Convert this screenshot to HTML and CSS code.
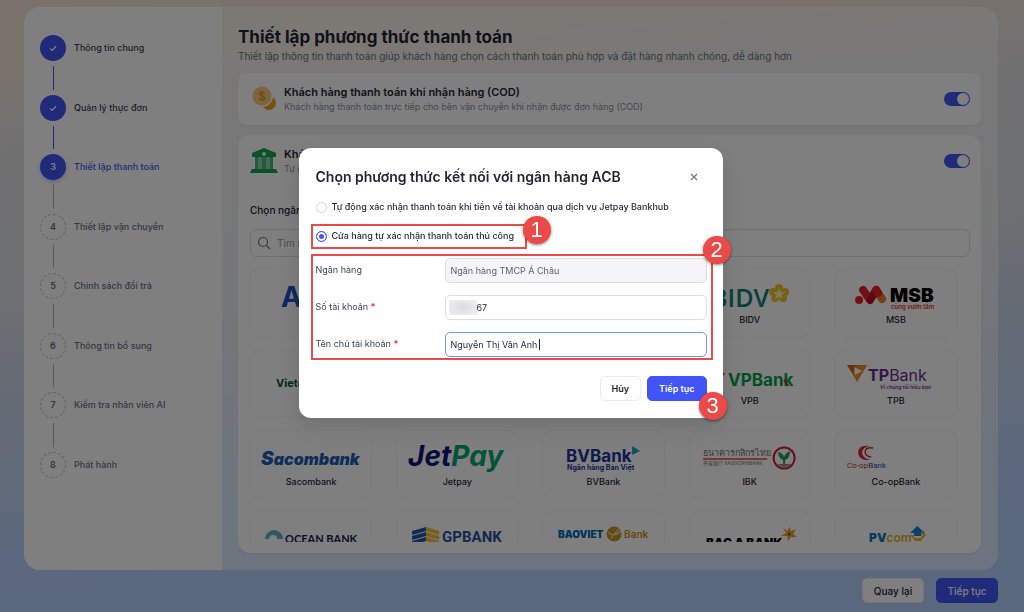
FILE: index.html
```html
<!DOCTYPE html>
<html lang="vi">
<head>
    <meta charset="UTF-8">
    <meta name="viewport" content="width=device-width, initial-scale=1.0">
    <title>Thiết lập phương thức thanh toán</title>
    <link rel="stylesheet" href="styles.css">
</head>
<body>
    <div class="page">
        <div class="panel">

            <!-- Setup steps -->
            <nav class="sidebar">
                <ol class="steps">
                    <li class="step done">
                        <div class="rail"><span class="dot"><svg width="10" height="10" viewBox="0 0 10 10"><path d="M2 5.4 4.1 7.4 8 3.2" fill="none" stroke="#fff" stroke-width="1.3"/></svg></span><span class="line"></span></div>
                        <span class="step-name">Thông tin chung</span>
                    </li>
                    <li class="step done">
                        <div class="rail"><span class="dot"><svg width="10" height="10" viewBox="0 0 10 10"><path d="M2 5.4 4.1 7.4 8 3.2" fill="none" stroke="#fff" stroke-width="1.3"/></svg></span><span class="line"></span></div>
                        <span class="step-name">Quản lý thực đơn</span>
                    </li>
                    <li class="step current">
                        <div class="rail"><span class="dot">3</span><span class="line"></span></div>
                        <span class="step-name">Thiết lập thanh toán</span>
                    </li>
                    <li class="step">
                        <div class="rail"><span class="dot">4</span><span class="line"></span></div>
                        <span class="step-name">Thiết lập vận chuyển</span>
                    </li>
                    <li class="step">
                        <div class="rail"><span class="dot">5</span><span class="line"></span></div>
                        <span class="step-name">Chính sách đổi trả</span>
                    </li>
                    <li class="step">
                        <div class="rail"><span class="dot">6</span><span class="line"></span></div>
                        <span class="step-name">Thông tin bổ sung</span>
                    </li>
                    <li class="step">
                        <div class="rail"><span class="dot">7</span><span class="line"></span></div>
                        <span class="step-name">Kiểm tra nhân viên AI</span>
                    </li>
                    <li class="step">
                        <div class="rail"><span class="dot">8</span></div>
                        <span class="step-name">Phát hành</span>
                    </li>
                </ol>
            </nav>

            <main class="content">
                <h1>Thiết lập phương thức thanh toán</h1>
                <p class="subtitle">Thiết lập thông tin thanh toán giúp khách hàng chọn cách thanh toán phù hợp và đặt hàng nhanh chóng, dễ dàng hơn</p>

                <!-- Cash on delivery -->
                <section class="card method">
                    <svg class="method-icon" width="28" height="28" viewBox="0 0 28 28">
                        <circle cx="19" cy="18" r="7" fill="#f0a020"/>
                        <circle cx="12" cy="11" r="11" fill="#fff"/>
                        <circle cx="12" cy="11" r="9.500" fill="#f8c880"/>
                        <path d="M14.500 9C14.200 7.700 13.300 7.200 12 7.200 10.500 7.200 9.600 7.900 9.600 9 9.600 11.600 14.600 10.200 14.600 13 14.600 14.200 13.500 14.900 12 14.900 10.500 14.900 9.600 14.300 9.300 13M12 5.800V16.200" fill="none" stroke="#e89a10" stroke-width="1.500"/>
                    </svg>
                    <div class="method-text">
                        <h2>Khách hàng thanh toán khi nhận hàng (COD)</h2>
                        <p>Khách hàng thanh toán trực tiếp cho bên vận chuyển khi nhận được đơn hàng (COD)</p>
                    </div>
                    <input type="checkbox" class="switch" aria-label="Thanh toán khi nhận hàng" checked>
                </section>

                <!-- Bank transfer -->
                <section class="card bank">
                    <div class="method">
                        <svg class="method-icon" width="28" height="28" viewBox="0 0 28 28">
                            <path d="M14 1 26 6V10H2V6Z" fill="#0ca24a"/>
                            <path d="M5 10H23V22H5Z" fill="#8ccfa6"/>
                            <path d="M5 10H8V22H5ZM12 10H16V22H12ZM20 10H23V22H20Z" fill="#4cb478"/>
                            <path d="M2 22H26L28 26H0Z" fill="#0ca24a"/>
                            <circle cx="14" cy="7" r="2" fill="#e4fff0"/>
                        </svg>
                        <div class="method-text">
                            <h2>Khách hàng chuyển khoản</h2>
                            <p>Tự động xác nhận thanh toán</p>
                        </div>
                        <input type="checkbox" class="switch" aria-label="Thanh toán chuyển khoản" checked>
                    </div>

                    <label class="bank-label" for="bankSearch">Chọn ngân hàng</label>
                    <div class="search">
                        <svg width="14" height="14" viewBox="0 0 14 14"><circle cx="6" cy="6" r="4.500" fill="none" stroke="#777b85" stroke-width="1.200"/><path d="M9.500 9.500 13 13" stroke="#777b85" stroke-width="1.300"/></svg>
                        <input type="text" id="bankSearch" placeholder="Tìm ngân hàng">
                    </div>

                    <div class="bank-grid">
                        <div class="bank-card">
                            <svg class="logo" viewBox="0 0 122 34"><text class="inter heavy" x="31" y="27" font-size="28" fill="#2050b8">ACB</text></svg>
                            <span>ACB</span>
                        </div>
                        <div class="bank-card"></div>
                        <div class="bank-card"></div>
                        <div class="bank-card">
                            <svg class="logo" viewBox="0 0 122 34">
                                <text class="open semi" x="80" y="27" font-size="25" text-anchor="end" fill="#0c807a">BIDV</text>
                                <g fill="#ecc22e">
                                    <circle cx="90" cy="8" r="4"/><circle cx="96" cy="12" r="4"/><circle cx="94" cy="18" r="4"/><circle cx="86" cy="18" r="4"/><circle cx="84" cy="12" r="4"/>
                                </g>
                                <path d="M90 8 91.500 12 96 12.500 92.500 15 94 19 90 16.800 86 19 87.500 15 84 12.500 88.500 12Z" fill="#fff2b0"/>
                            </svg>
                            <span>BIDV</span>
                        </div>
                        <div class="bank-card">
                            <svg class="logo" viewBox="0 0 122 34">
                                <circle cx="24" cy="20" r="4" fill="#e8202a"/>
                                <path d="M41 10 47 19" stroke="#f07a28" stroke-width="8" stroke-linecap="round"/>
                                <path d="M28 10 35 20 41 10" fill="none" stroke="#e8202a" stroke-width="8" stroke-linecap="round" stroke-linejoin="round"/>
                                <path d="M35 20 39 13" stroke="#b8141e" stroke-width="7" stroke-linecap="round"/>
                                <path d="M41 10 43 13" stroke="#e8202a" stroke-width="8" stroke-linecap="round"/>
                                <text class="inter black" x="55" y="22" font-size="19" fill="#000">MSB</text>
                                <text class="inter semi" x="56" y="29" font-size="6" fill="#e8302a">cùng vươn tầm</text>
                            </svg>
                            <span>MSB</span>
                        </div>

                        <div class="bank-card">
                            <svg class="logo" viewBox="0 0 122 34"><text class="inter heavy" x="26" y="26" font-size="11" fill="#005a34">Vietcombank</text></svg>
                            <span>VCB</span>
                        </div>
                        <div class="bank-card"></div>
                        <div class="bank-card"></div>
                        <div class="bank-card">
                            <svg class="logo" viewBox="0 0 122 34">
                                <path d="M28 12H36L34 15Z" fill="#e02020"/>
                                <text class="inter heavy" x="39" y="25" font-size="17" fill="#00a044">VPBank</text>
                                <path d="M95 19 99 25" fill="none" stroke="#d01c24" stroke-width="2"/>
                            </svg>
                            <span>VPB</span>
                        </div>
                        <div class="bank-card">
                            <svg class="logo" viewBox="0 0 122 34">
                                <path d="M12 4H32L22 21Z" fill="#f08a20"/>
                                <path d="M12 4H22L17 12Z" fill="#d85c14"/>
                                <path d="M19 6 27 10 20 14Z" fill="#fff"/>
                                <text class="inter" x="33" y="20" font-size="16" fill="#6a2c98"><tspan class="heavy">TP</tspan>Bank</text>
                                <text class="inter semi slant" x="45" y="28" font-size="5" fill="#6a2c98">Vì chúng tôi hiểu bạn</text>
                            </svg>
                            <span>TPB</span>
                        </div>

                        <div class="bank-card">
                            <svg class="logo" viewBox="0 0 122 34"><text class="inter black slant" x="11" y="23" font-size="16" fill="#1c5cae"><tspan font-size="19">S</tspan>acombank</text></svg>
                            <span>Sacombank</span>
                        </div>
                        <div class="bank-card">
                            <svg class="logo" viewBox="0 0 122 34"><text class="inter heavy slant" x="12" y="24" font-size="28" fill="#0c1278">Jet<tspan fill="#00a870">Pay</tspan></text></svg>
                            <span>Jetpay</span>
                        </div>
                        <div class="bank-card">
                            <svg class="logo" viewBox="0 0 122 34">
                                <text class="inter heavy" x="24" y="20" font-size="17" fill="#20329a">BVBank</text>
                                <text class="inter heavy" x="25" y="28" font-size="7" fill="#20329a">Ngân hàng Bản Việt</text>
                                <path d="M90 4 98 9 90 13Z" fill="#1c9ac8"/>
                            </svg>
                            <span>BVBank</span>
                        </div>
                        <div class="bank-card">
                            <svg class="logo" viewBox="0 0 122 34">
                                <text class="thai" x="14" y="14" font-size="9" fill="#84746c">ธนาคารกสิกรไทย</text>
                                <path d="M14 17H78" stroke="#d84848" stroke-width="1.500"/>
                                <text class="thai" x="14" y="23" font-size="5" fill="#84746c">开泰银行 KASIKORNBANK</text>
                                <circle cx="95" cy="16" r="10.500" fill="none" stroke="#d81c30" stroke-width="2"/>
                                <path d="M88 22H102Q99 25 95 25 91 25 88 22Z" fill="#8c8c8c"/>
                                <path d="M89 10Q94 11 95 15 96 11 101 9 101 16 96 18V22H94V18Q89 16 89 10Z" fill="#20a058"/>
                            </svg>
                            <span>IBK</span>
                        </div>
                        <div class="bank-card">
                            <svg class="logo" viewBox="0 0 122 34">
                                <path d="M35 4Q23 2 23 11 24 19 35 18 27 16 27 10 28 5 35 4Z" fill="#d82830"/>
                                <path d="M38 6Q30 5 30 10 30 14 36 15" fill="none" stroke="#d82830" stroke-width="1.500"/>
                                <text class="roboto" x="12" y="26" font-size="8" fill="#d82830">Co-op<tspan fill="#24489a">Bank</tspan></text>
                            </svg>
                            <span>Co-opBank</span>
                        </div>

                        <div class="bank-card">
                            <svg class="logo" viewBox="0 0 122 34">
                                <path d="M15 16A9 9 0 1 1 33 16H27A4 4 0 0 0 19 16Z" fill="#5ab4bc"/>
                                <text class="lato heavy" x="35" y="20" font-size="11" fill="#14205c">OCEAN BANK</text>
                            </svg>
                            <span>OceanBank</span>
                        </div>
                        <div class="bank-card">
                            <svg class="logo" viewBox="0 0 122 34">
                                <path d="M16 8 30 4V8L16 12ZM16 13 30 9V13L16 17ZM16 18 30 14V18L16 22Z" fill="#1c58a8"/>
                                <path d="M30 4 43 8V12L30 8ZM30 9 43 13V17L30 13ZM30 14 43 18V22L30 18Z" fill="#ecc02c"/>
                                <text class="roboto heavy" x="46" y="19" font-size="15" fill="#24509c">GPBANK</text>
                            </svg>
                            <span>GPBank</span>
                        </div>
                        <div class="bank-card">
                            <svg class="logo" viewBox="0 0 122 34">
                                <text class="inter black" x="16" y="15" font-size="10" fill="#0068b4">BAOVIET</text>
                                <circle cx="72" cy="11" r="7.500" fill="#c89028"/>
                                <path d="M66 9Q72 15 79 8M68 16Q73 10 78 5" fill="none" stroke="#f4d898" stroke-width="1.200"/>
                                <text class="inter semi" x="82" y="15" font-size="10" fill="#d09020">Bank</text>
                            </svg>
                            <span>BaoVietBank</span>
                        </div>
                        <div class="bank-card">
                            <svg class="logo" viewBox="0 0 122 34">
                                <text class="inter black" x="17" y="24" font-size="12" fill="#000">BAC A BANK</text>
                                <path d="M100 4 102 8 107 6 104 11 108 14 102 14 99 18 98 13 92 13 97 10 94 5 99 8Z" fill="#e8a028"/>
                                <circle cx="100" cy="11" r="1.500" fill="#8c4c10"/>
                            </svg>
                            <span>BacABank</span>
                        </div>
                        <div class="bank-card">
                            <svg class="logo" viewBox="0 0 122 34">
                                <text class="inter black" x="34" y="19" font-size="12" fill="#0878be">PV<tspan class="semi" fill="#e4ac18">com</tspan></text>
                                <path d="M75 10 82 3 90 10H86V13H79V10Z" fill="#0a84cc"/>
                                <path d="M75 12H79V15H86V18H80ZM86 8 91 12 86 17V14L88 12 86 11Z" fill="#f0b41c"/>
                            </svg>
                            <span>PVcomBank</span>
                        </div>
                    </div>
                </section>
            </main>
        </div>

        <footer class="page-footer">
            <button type="button" class="btn wide">Quay lại</button>
            <button type="button" class="btn primary wide">Tiếp tục</button>
        </footer>
    </div>

    <!-- Connect dialog -->
    <div class="overlay">
        <form class="modal" role="dialog" aria-labelledby="modalTitle">
            <div class="modal-header">
                <h2 id="modalTitle">Chọn phương thức kết nối với ngân hàng ACB</h2>
                <button type="button" class="close" aria-label="Đóng"><svg width="8" height="8" viewBox="0 0 8 8"><path d="M1 1 7 7M7 1 1 7" stroke="#6b7080" stroke-width="1.100"/></svg></button>
            </div>

            <label class="option"><input type="radio" name="mode">Tự động xác nhận thanh toán khi tiền về tài khoản qua dịch vụ Jetpay Bankhub</label>

            <div class="callout callout-option">
                <label class="option"><input type="radio" name="mode" checked>Cửa hàng tự xác nhận thanh toán thủ công</label>
                <span class="badge badge-one">1</span>
            </div>

            <div class="callout callout-fields">
                <div class="field">
                    <label for="bankName">Ngân hàng</label>
                    <div class="control"><input type="text" id="bankName" value="Ngân hàng TMCP Á Châu" disabled></div>
                </div>
                <div class="field">
                    <label for="accountNumber">Số tài khoản <b>*</b></label>
                    <div class="control"><input type="text" id="accountNumber" class="masked" value="67"><span class="mask"></span></div>
                </div>
                <div class="field">
                    <label for="accountName">Tên chủ tài khoản <b>*</b></label>
                    <div class="control"><input type="text" id="accountName" class="active" value="Nguyễn Thị Vân Anh"><span class="caret"></span></div>
                </div>
                <span class="badge badge-two">2</span>
            </div>

            <div class="modal-footer">
                <button type="button" class="btn">Hủy</button>
                <button type="button" class="btn primary">Tiếp tục</button>
                <span class="badge badge-three">3</span>
            </div>
        </form>
    </div>
</body>
</html>
```
FILE: styles.css
```css
* {
    box-sizing: border-box;
}

body {
    margin: 0;
    font-family: Inter, "Noto Sans", sans-serif;
    font-size: 9px;
    line-height: 12px;
    color: #1f2433;
}

h1, h2, p, ol {
    margin: 0;
    padding: 0;
}

input, button {
    font: inherit;
    color: inherit;
}

.page {
    display: flex;
    flex-direction: column;
    height: 100vh;
    padding-top: 7px;
    overflow: hidden;
    background: linear-gradient(175deg, #f4e5d5 0%, #f2e4d6 10%, #e2e1e3 22%, #dddfe6 42%, #c4d2ea 62%, #b6d1fb 80%, #b4d1fd 100%);
}

.panel {
    display: flex;
    flex: 1;
    min-height: 0;
    margin: 0 26px 0 24px;
    border-radius: 16px;
    overflow: hidden;
    background: rgba(255, 255, 255, 0.5);
}

/* Sidebar steps */
.sidebar {
    width: 198px;
    padding: 28px 16px;
    background: #fff;
}

.steps {
    display: flex;
    flex-direction: column;
    height: 443px;
    list-style: none;
}

.step {
    display: flex;
    flex: 1;
    gap: 8px;
    font-weight: 500;
    color: #6b7080;
}

.step:last-child {
    flex: none;
}

.rail {
    display: flex;
    flex-direction: column;
    align-items: center;
}

.dot {
    display: flex;
    align-items: center;
    justify-content: center;
    width: 26px;
    height: 26px;
    border: 1px dashed #c0c2c8;
    border-radius: 50%;
    font-weight: 600;
}

.line {
    flex: 1;
    width: 1px;
    margin: 5px 0;
    background: #b4b6bc;
}

.step-name {
    line-height: 26px;
}

.done .dot, .current .dot {
    border: none;
    background: #4154f5;
    color: #fff;
}

.done {
    color: #3a3f4c;
}

.done .line {
    background: #4154f5;
}

.current {
    color: #4154f5;
}

.current .dot {
    box-shadow: 0 2px 4px rgba(65, 84, 245, 0.3);
}

/* Content */
.content {
    display: flex;
    flex-direction: column;
    flex: 1;
    min-width: 0;
    padding: 19px 17px 17px 16px;
}

h1 {
    font-size: 17px;
    line-height: 22px;
    font-weight: 700;
}

.subtitle {
    margin-bottom: 9px;
    font-size: 10px;
    line-height: 16px;
    color: #6b7080;
}

.card {
    border-radius: 8px;
    background: #fff;
    box-shadow: 0 1px 2px rgba(0, 0, 0, 0.06);
}

.method {
    display: flex;
    align-items: center;
    gap: 6px;
}

.card.method {
    height: 52px;
    margin-bottom: 10px;
    padding: 0 11px 0 12px;
}

.method-text {
    flex: 1;
}

.method h2 {
    font-size: 11px;
    line-height: 16px;
    font-weight: 600;
}

.method p {
    line-height: 14px;
    color: #8a8e98;
}

.switch {
    display: flex;
    align-items: center;
    width: 26px;
    height: 14px;
    margin: 0;
    padding: 1px;
    border-radius: 7px;
    appearance: none;
    background: #4154f5;
}

.switch::before {
    content: "";
    width: 12px;
    height: 12px;
    margin-left: auto;
    border-radius: 50%;
    background: #fff;
}

.bank {
    display: flex;
    flex-direction: column;
    flex: 1;
    min-height: 0;
    padding: 11px 11px 11px 12px;
    border-radius: 12px;
}

.bank-label {
    margin: 28px 0 13px;
    font-size: 10px;
    font-weight: 500;
}

.search {
    display: flex;
    align-items: center;
    gap: 6px;
    min-height: 28px;
    padding: 0 6px;
    border: 1px solid #e0e0e4;
    border-radius: 6px;
}

.search input {
    flex: 1;
    padding: 0;
    border: none;
    font-size: 10px;
    background: none;
}

.search input::placeholder {
    color: #9a9ca4;
}

.bank-grid {
    display: grid;
    grid-template-columns: repeat(5, 1fr);
    grid-auto-rows: 69px;
    gap: 12px 24px;
    flex: 1;
    min-height: 0;
    margin-top: 11px;
    padding-right: 13px;
    overflow: hidden;
}

.bank-card {
    padding-top: 12px;
    border-radius: 10px;
    box-shadow: inset 0 0 0 1px #f6f6f8;
    text-align: center;
    font-weight: 500;
}

.logo {
    display: block;
    width: 100%;
    height: 34px;
}

/* Logo lettering */
.inter { font-family: Inter, sans-serif; }
.open { font-family: "Open Sans", sans-serif; }
.roboto { font-family: Roboto, sans-serif; }
.lato { font-family: Lato, sans-serif; }
.thai { font-family: "Noto Sans", "Noto Sans CJK SC", sans-serif; }
.logo text { font-weight: 400; }
.logo .semi { font-weight: 600; }
.logo .heavy { font-weight: 700; }
.logo .black { font-weight: 900; }
.logo .slant { font-style: italic; }

/* Buttons */
.page-footer {
    display: flex;
    justify-content: flex-end;
    gap: 12px;
    padding: 8px 26px 9px;
}

.btn {
    height: 25px;
    padding: 0 11px;
    border: 1px solid #ececf0;
    border-radius: 5px;
    background: #fff;
    font-weight: 600;
}

.btn.primary {
    border-color: #4154f5;
    background: #4154f5;
    color: #fff;
}

.btn.wide {
    min-width: 62px;
    padding: 0;
    font-size: 10px;
    font-weight: 500;
}

/* Dialog */
.overlay {
    position: fixed;
    inset: 0;
    display: flex;
    align-items: flex-start;
    justify-content: center;
    padding: 148px 3px 0 0;
    background: rgba(0, 0, 0, 0.5);
}

.modal {
    width: 424px;
    padding: 19px 16px 17px 17px;
    border-radius: 12px;
    background: #fff;
    box-shadow: 0 6px 16px rgba(0, 0, 0, 0.08), 0 9px 28px 8px rgba(0, 0, 0, 0.05);
}

.modal-header {
    display: flex;
    align-items: center;
    justify-content: space-between;
    margin-bottom: 12px;
}

.modal-header h2 {
    font-size: 14px;
    line-height: 20px;
    font-weight: 600;
}

.close {
    display: flex;
    padding: 0;
    margin-right: 9px;
    border: none;
    background: none;
}

.option {
    display: flex;
    align-items: center;
    gap: 5px;
    height: 16px;
    font-weight: 500;
}

.option input {
    width: 11px;
    height: 11px;
    margin: 0;
    border: 1px solid #d4d6dc;
    border-radius: 50%;
    appearance: none;
}

.option input:checked {
    border-color: #4154f5;
    background: #4154f5;
    box-shadow: inset 0 0 0 2px #fff;
}

.callout {
    position: relative;
    border: 2px solid #ec4a48;
}

.callout-option {
    width: 216px;
    margin: 9px 0 5px -5px;
    padding: 2px 3px 3px;
}

.callout-fields {
    display: flex;
    flex-direction: column;
    gap: 12px;
    margin: 0 -6px 16px -5px;
    padding: 2px 4px 1px 3px;
}

.badge {
    position: absolute;
    width: 28px;
    height: 28px;
    border-radius: 50%;
    background: #ec4a48;
    box-shadow: 0 1px 3px rgba(0, 0, 0, 0.5);
    color: #fff;
    font-family: "Liberation Sans", sans-serif;
    font-size: 22px;
    line-height: 28px;
    text-align: center;
}

.badge-one { top: -10px; right: -26px; }
.badge-two { top: -20px; right: -20px; }
.badge-three { top: 16px; right: -20px; }

.field {
    display: flex;
}

.field label {
    width: 129px;
    line-height: 24px;
    color: #3a3f4c;
}

.field b {
    color: #f03838;
}

.control {
    position: relative;
    flex: 1;
}

.control input {
    display: block;
    width: 100%;
    height: 25px;
    padding: 0 5px;
    border: 1px solid #dcdee4;
    border-radius: 5px;
    background: #fff;
}

.control input:disabled {
    background: #f5f5f7;
    color: #5c606c;
}

.control .active {
    border-color: #6f94fa;
}

.control .masked {
    padding-left: 31px;
}

.mask {
    position: absolute;
    top: 5px;
    left: 4px;
    width: 28px;
    height: 15px;
    background: radial-gradient(ellipse, #dcdcde, #f0f0f2);
}

.caret {
    position: absolute;
    top: 7px;
    left: 94px;
    width: 1px;
    height: 11px;
    background: #1f2433;
}

.modal-footer {
    position: relative;
    display: flex;
    justify-content: flex-end;
    gap: 6px;
}
```
